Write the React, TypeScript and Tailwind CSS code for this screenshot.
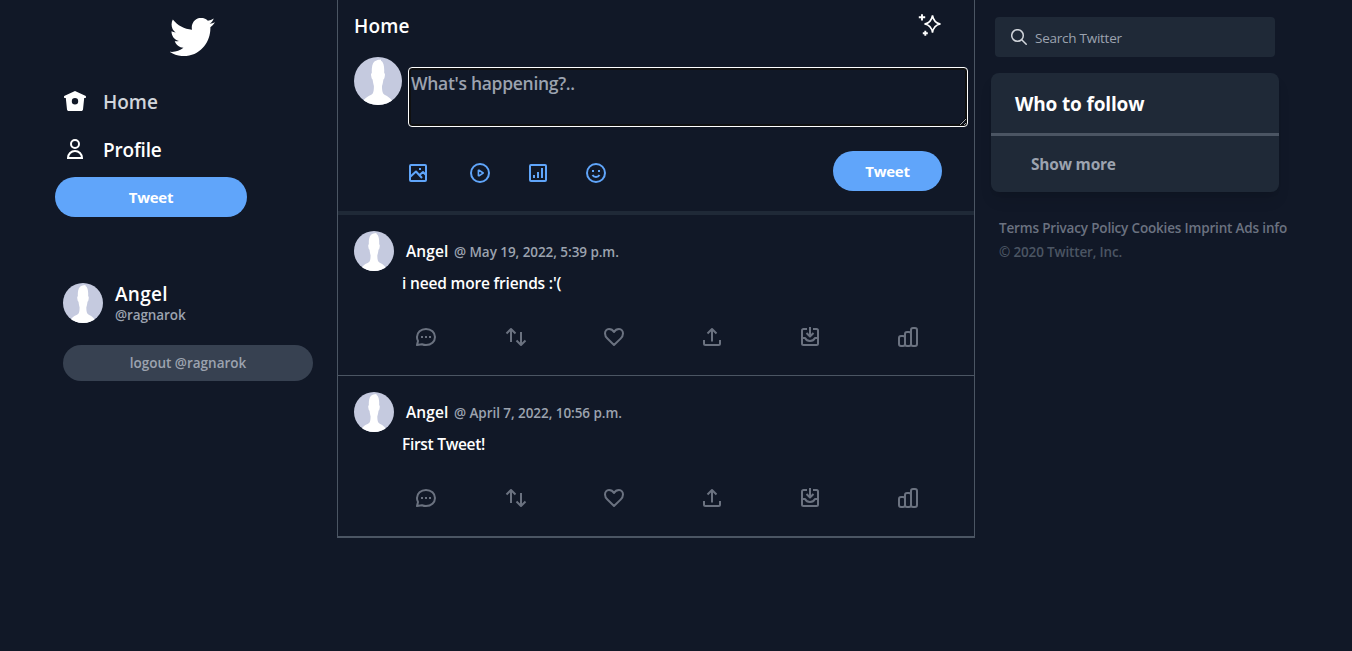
import React from "react";

type IconProps = { className?: string; children: React.ReactNode };

function Icon({ className = "", children }: IconProps) {
  return (
    <svg
      viewBox="0 0 24 24"
      fill="none"
      stroke="currentColor"
      strokeWidth="2"
      strokeLinejoin="round"
      className={`h-6 w-6 shrink-0 ${className}`}
    >
      {children}
    </svg>
  );
}

function Bird() {
  return (
    <svg viewBox="1.1 2.85 22.540 18.3" preserveAspectRatio="none" fill="currentColor" className="h-[38px] w-[45px]">
      <path d="M23.643 4.937c-.835.37-1.732.62-2.675.733.962-.576 1.7-1.49 2.048-2.578-.9.534-1.897.922-2.958 1.13-.85-.904-2.06-1.47-3.4-1.47-2.572 0-4.658 2.086-4.658 4.66 0 .364.042.718.12 1.06-3.873-.195-7.304-2.05-9.602-4.868-.4.69-.63 1.49-.63 2.342 0 1.616.823 3.043 2.072 3.878-.764-.025-1.482-.234-2.11-.583v.06c0 2.257 1.605 4.14 3.737 4.568-.392.106-.803.162-1.227.162-.3 0-.593-.028-.877-.082.593 1.85 2.313 3.198 4.352 3.234-1.595 1.25-3.604 1.995-5.786 1.995-.376 0-.747-.022-1.112-.065 2.062 1.323 4.51 2.093 7.14 2.093 8.57 0 13.255-7.098 13.255-13.254 0-.2-.005-.402-.014-.602.91-.658 1.7-1.477 2.323-2.41z" />
    </svg>
  );
}

function Avatar({ className }: { className: string }) {
  return (
    <svg viewBox="0 0 48 48" className={`shrink-0 rounded-full bg-[#c5cadf] ${className}`}>
      <path
        fill="#fff"
        d="M27 2.500c-3 .3-6.500.8-8 4-1.200 2.500-1.300 6-1.200 9.500-.8.300-.9 1.500-.6 3 .3 1.700.5 3.200 1.400 3.400.4 3 .9 5 1.300 6.600 0 3-.2 6-1.200 7.500-1.500 2-7 3-9.500 7.500V48h29v-4c-2.500-4.500-7.500-5.500-9-7.500-1-1.500-1.200-4.500-1.200-7.500.6-1.600 1-3.600 1.400-6.600.9-.2 1.100-1.700 1.400-3.400.3-1.500.2-2.700-.6-3 .2-4-.1-8.500-1.600-10.800-.8-1.100-1.100-1.200-1.600-1.500z"
      />
    </svg>
  );
}

const actions = [
  {
    name: "reply",
    drawing: (
      <>
        <path d="M3 20l1-4a7.500 7.500 0 0 1-1-4c0-4.600 3.800-8 9-8s9 3.400 9 8-3.800 8-9 8c-1.300 0-2.700-.3-4-.8z" />
        <path d="M7 12h2M11 12h2M15 12h2" />
      </>
    ),
  },
  {
    name: "retweet",
    drawing: <path d="M7 17V4M2.500 8.500L7 4l4.500 4.500M17 7v13M12.500 15.500L17 20l4.500-4.500" />,
  },
  {
    name: "like",
    drawing: (
      <path d="M12 7C10.600 4.600 8.600 4 7 4 4.600 4 3 6 3 8.600c0 2.200 1 3.700 2.400 5L12 20l6.600-6.400c1.400-1.300 2.400-2.800 2.400-5C21 6 19.400 4 17 4c-1.600 0-3.600.6-5 3z" />
    ),
  },
  {
    name: "share",
    drawing: <path d="M12 16.500V4M7.500 8.500L12 4l4.500 4.500M4 15v3.500A1.500 1.500 0 0 0 5.500 20h13a1.500 1.500 0 0 0 1.500-1.500V15" />,
  },
  {
    name: "save",
    drawing: (
      <path d="M9 4H5.500A1.500 1.500 0 0 0 4 5.500v13A1.500 1.500 0 0 0 5.500 20h13a1.500 1.500 0 0 0 1.500-1.500v-13A1.500 1.500 0 0 0 18.500 4H15M12 2v9M8.500 8l3.500 3.500L15.500 8M4 13h3c1 2 2.500 3 5 3s4-1 5-3h3" />
    ),
  },
  {
    name: "stats",
    drawing: (
      <>
        <rect x="3" y="11" width="6" height="10" rx="2" />
        <rect x="9" y="7" width="6" height="14" rx="2" />
        <rect x="15" y="3" width="6" height="18" rx="2" />
      </>
    ),
  },
];

function Tweet({ date, text, textClass }: { date: string; text: string; textClass: string }) {
  return (
    <article className="h-40 px-4 pt-4">
      <div className="flex h-10 items-center">
        <Avatar className="h-10 w-10" />
        <p className="ml-3 flex items-baseline text-[15.5px] leading-6 font-semibold whitespace-pre">
          <span className="w-12 tracking-[0.1px]">Angel</span>
          <span className="text-[13.5px] tracking-[-0.06px] text-[#9ca3af]">{date}</span>
        </p>
      </div>
      <p className={`ml-12 text-[15.5px] leading-6 font-semibold ${textClass}`}>{text}</p>
      <div className="mt-[30px] ml-[60px] flex text-[#6b7280]">
        {actions.map((action) => (
          <span key={action.name} className="flex w-[98px] shrink-0 first:w-[90px] last:w-6">
            <Icon>{action.drawing}</Icon>
          </span>
        ))}
      </div>
    </article>
  );
}

export default function App() {
  return (
    <div className="flex min-h-[651px] items-start bg-[#111827] font-['Open_Sans','Noto_Sans',sans-serif] text-white">
      <aside className="w-[337px] shrink-0">
        <div className="ml-[170px] pt-[18px]">
          <Bird />
        </div>
        <nav className="mt-[22px] ml-[63px] flex flex-col">
          <a className="flex h-12 items-center text-[19px] font-semibold text-[#d1d5db]">
            <svg viewBox="0 0 24 24" className="h-6 w-6 text-white" fill="currentColor">
              <path
                fillRule="evenodd"
                d="M12 1L22.300 5.800c.8.400.9 1.200.4 2.200h-1.500l-1.200 11.500c-.1.900-.8 1.500-1.700 1.500H5.700c-.9 0-1.600-.6-1.700-1.500L2.800 8H1.300C.8 7 .9 6.200 1.700 5.800zM12 8a3.200 3.200 0 1 0 0 6.400A3.200 3.200 0 0 0 12 8z"
              />
            </svg>
            <span className="ml-4">Home</span>
          </a>
          <a className="flex h-12 items-center text-[19px] font-semibold">
            <Icon className="-mt-0.5">
              <circle cx="12" cy="7" r="4" />
              <path d="M5 21a7 7 0 0 1 14 0z" strokeLinejoin="miter" />
            </Icon>
            <span className="ml-4 tracking-[-0.2px]">Profile</span>
          </a>
        </nav>
        <button className="mt-[3px] ml-[55px] h-10 w-48 rounded-full bg-[#60a5fa] text-[15px] font-bold tracking-[-0.25px]">Tweet</button>
        <div className="mt-[66px] ml-[63px] flex h-10 items-center">
          <Avatar className="h-10 w-10" />
          <div className="ml-3">
            <p className="text-[19px] leading-6 font-semibold tracking-[0.3px]">Angel</p>
            <p className="text-[13.5px] leading-[18px] font-semibold tracking-[-0.1px] text-[#9ca3af]">@ragnarok</p>
          </div>
        </div>
        <button className="mt-[22px] ml-[63px] h-9 w-[250px] rounded-full bg-[#374151] text-[13.5px] font-semibold text-[#9ca3af]">
          logout @ragnarok
        </button>
      </aside>

      <main className="h-[538px] w-[638px] shrink-0 border-x border-b-2 border-[#4b5563]">
        <header className="flex h-[57px] items-start justify-between pr-8 pl-4">
          <h1 className="mt-3 text-[19px] leading-7 font-semibold tracking-[0.2px]">Home</h1>
          <svg viewBox="0 0 24 24" className="mt-[13px] h-6 w-6" fill="none" stroke="currentColor" strokeWidth="1.600">
            <path d="M14.500 2.500c.9 5.300 2.900 7.700 8 8.500-5.100.8-7.100 3.200-8 8.500-.9-5.300-2.900-7.700-8-8.500 5.100-.8 7.100-3.200 8-8.500z" />
            <path d="M4 1.200v6.300M.8 4.300h6.400M7.300 17.800v5M4.800 20.300h5" strokeWidth="1.900" />
          </svg>
        </header>
        <section className="flex pl-4">
          <Avatar className="h-12 w-12" />
          <textarea
            placeholder="What's happening?.."
            className="mt-2.5 ml-1.5 h-[60px] w-[560px] resize rounded-[4px] border border-white p-0.5 pt-px text-[17.5px] leading-7 font-semibold tracking-[-0.3px] shadow-[inset_0_0_0_2px_#101010] outline-none placeholder:text-[#9ca3af]"
          />
        </section>
        <div className="mt-6 flex h-10 items-center pr-8 pl-[68px] text-[#60a5fa]">
          <Icon className="mt-1">
            <rect x="4" y="4" width="16" height="16" rx="1" />
            <path d="M4 16l6-5.500 6 6.500M13.500 14l3.500-3 3 3M13 8h2" />
          </Icon>
          <Icon className="mt-1 ml-[38px]">
            <circle cx="12" cy="12" r="9" />
            <path d="M10.400 9.200v5.600h.6l4.200-2.800-4.200-2.800z" strokeWidth="1.600" />
          </Icon>
          <Icon className="mt-1 ml-[34px]">
            <rect x="4" y="4" width="16" height="16" rx="1" />
            <path d="M8 17v-3M12 17v-6M16 17V7" />
          </Icon>
          <Icon className="mt-1 ml-[34px]">
            <circle cx="12" cy="12" r="9" />
            <path d="M8 10h2M14 10h2M8.500 14c1 1.700 2.200 2 3.500 2s2.500-.3 3.500-2" />
          </Icon>
          <button className="ml-auto h-10 w-[109px] rounded-full bg-[#60a5fa] text-[15px] font-bold tracking-[-0.25px] text-white">Tweet</button>
        </div>
        <hr className="mt-5 border-t-4 border-[#1f2937]" />
        <Tweet date="@ May 19, 2022, 5:39 p.m." text="i need more friends :'(" textClass="tracking-[-0.17px]" />
        <hr className="border-t border-[#4b5563]" />
        <Tweet date="@ April 7, 2022, 10:56 p.m." text="First Tweet!" textClass="tracking-[-0.3px]" />
      </main>

      <aside className="ml-4 pt-[17px]">
        <label className="ml-1 flex h-10 w-[280px] items-center rounded bg-[#1f2937] pl-4 text-[#d1d5db]">
          <svg viewBox="0 0 16 16" fill="none" stroke="currentColor" strokeWidth="1.500" className="h-4 w-4">
            <circle cx="6.500" cy="6.500" r="5.800" />
            <path d="M10.700 10.700l5 5" />
          </svg>
          <input
            placeholder="Search Twitter"
            className="mt-0.5 ml-2 w-56 bg-transparent text-[13.5px] tracking-[-0.25px] outline-none placeholder:text-[#9ca3af]"
          />
        </label>
        <section className="mt-4 h-[119px] w-72 rounded-lg bg-[#1f2937] shadow-lg">
          <h2 className="flex h-[60px] items-center pl-6 text-[19px] font-bold tracking-[-0.15px]">
            <span className="mt-0.5">Who to follow</span>
          </h2>
          <hr className="border-t-[3px] border-[#4b5563]" />
          <p className="pt-4 pl-10 text-[15.5px] leading-6 font-bold tracking-[-0.2px] text-[#9ca3af]">Show more</p>
        </section>
        <footer className="mt-6 ml-2 text-[13.5px] leading-6 font-semibold whitespace-nowrap">
          <p className="tracking-[-0.17px] text-[#6b7280]">Terms Privacy Policy Cookies Imprint Ads info</p>
          <p className="tracking-[-0.15px] text-[#4b5563]">© 2020 Twitter, Inc.</p>
        </footer>
      </aside>
    </div>
  );
}
